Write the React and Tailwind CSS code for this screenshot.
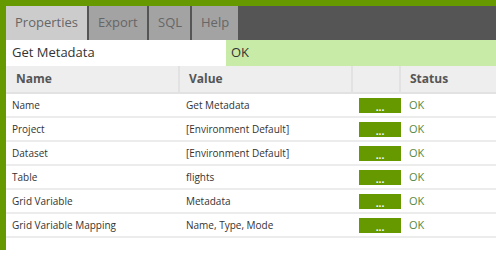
export default function App() {
  const tabs = [
    { label: 'Properties', w: 'w-[81px]', active: true },
    { label: 'Export', w: 'w-[58px]' },
    { label: 'SQL', w: 'w-[41px]' },
    { label: 'Help', w: 'w-[46px]' },
  ];

  const rows = [
    ['Name', 'Get Metadata'],
    ['Project', '[Environment Default]'],
    ['Dataset', '[Environment Default]'],
    ['Table', 'flights'],
    ['Grid Variable', 'Metadata'],
    ['Grid Variable Mapping', 'Name, Type, Mode'],
  ];

  return (
    <div className="w-[496px] h-[256px] bg-white" style={{ fontFamily: '"Open Sans", sans-serif' }}>
      <div className="h-[250px] bg-[#669900] pl-[6px] pt-[6px]">
        <div className="h-full bg-white flex flex-col">
          <div className="h-[34px] bg-[#555555] flex gap-[2px]">
            {tabs.map((t) => (
              <div
                key={t.label}
                className={`${t.w} h-full flex items-center pl-[9px] text-[13px] text-[#666] ${
                  t.active ? 'bg-[#cccccc]' : 'bg-[#a3a3a3]'
                }`}
              >
                {t.label}
              </div>
            ))}
          </div>

          <div className="h-[26px] flex text-[13px] text-[#333]">
            <div className="w-[220px] flex items-center pl-[6px] bg-white">Get Metadata</div>
            <div className="flex-1 flex items-center pl-[5px] bg-[#c8eca8]">OK</div>
          </div>

          <div className="h-[28px] flex bg-[#eeeeee] border-b-2 border-[#e2e2e2] text-[12px] font-bold text-[#555]">
            <div className="w-[174px] flex items-center pl-[10px] border-r-2 border-[#e2e2e2]">Name</div>
            <div className="w-[173px] flex items-center pl-[9px] border-r-2 border-[#e2e2e2]">Value</div>
            <div className="w-[48px] border-r-2 border-[#e2e2e2]"></div>
            <div className="flex-1 flex items-center pl-[9px]">Status</div>
          </div>

          {rows.map(([name, value]) => (
            <div key={name} className="h-[24px] flex items-center border-b-2 border-[#ececec] text-[10px] text-[#333]">
              <div className="w-[174px] pl-[6px]">{name}</div>
              <div className="w-[173px] pl-[6px]">{value}</div>
              <div className="w-[50px] flex items-center">
                <button className="ml-[6px] w-[42px] h-[15px] bg-[#669900] text-white text-[10px] font-bold leading-none flex items-end justify-center pb-[1px]">
                  ...
                </button>
              </div>
              <div className="flex-1 pl-[6px] text-[11px] text-[#55893f]">OK</div>
            </div>
          ))}
        </div>
      </div>
    </div>
  );
}
